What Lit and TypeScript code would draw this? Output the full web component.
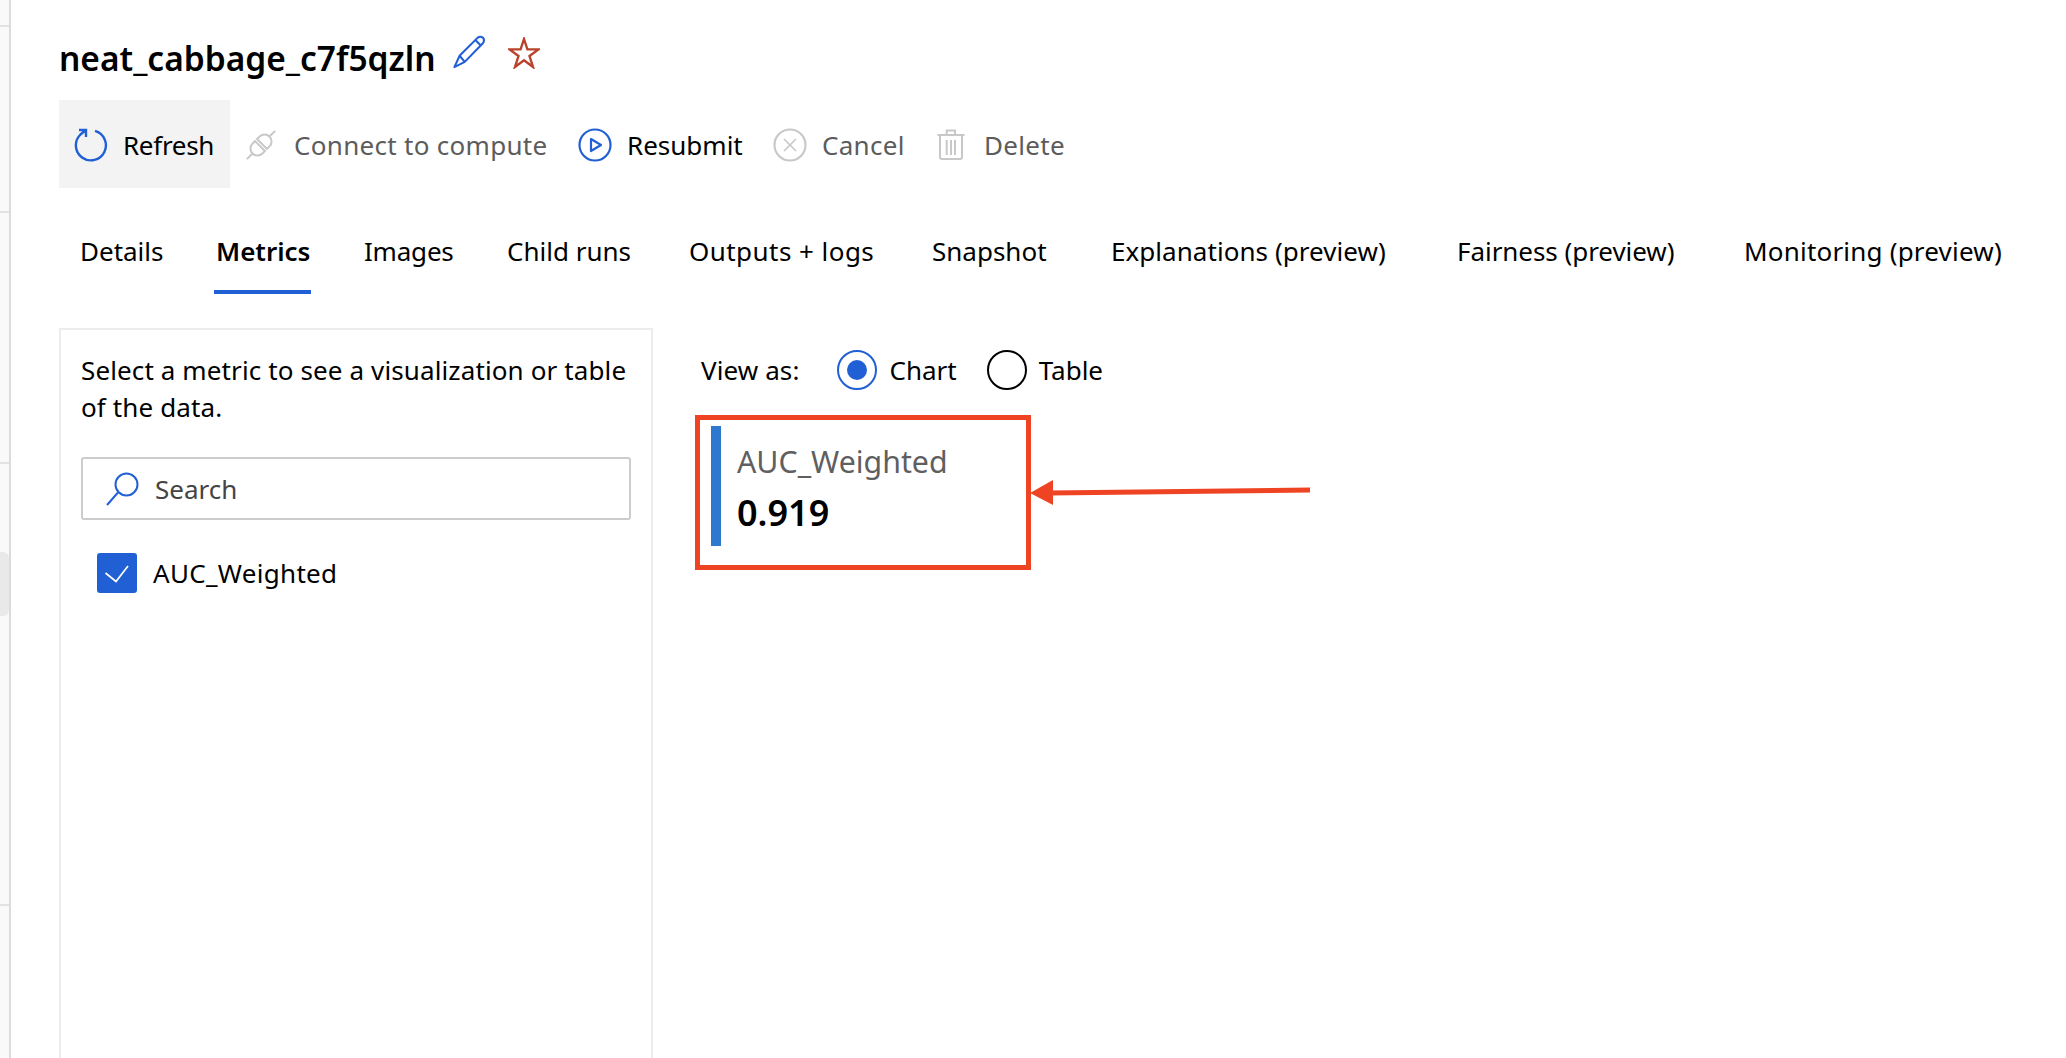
import { LitElement, html, css } from "lit";
import { customElement } from "lit/decorators.js";

const BLUE = "#2160d4";

@customElement("app-root")
export class AppRoot extends LitElement {
  static styles = css`
    :host { display: block; height: 1058px; overflow: hidden; background: #fff; color: #000;
      font-family: "Noto Sans", "Open Sans", sans-serif; font-size: 26px; }
    svg { display: block; flex: none; fill: none; }
    .page { display: flex; height: 1058px; }
    .rail { width: 9px; flex: none; background: #f9f9f9; border-right: 2px solid #dcdcdc; display: flex; flex-direction: column; }
    .seg { border-bottom: 2px solid #e2e2e2; box-sizing: border-box; }
    .s1 { height: 27px; } .s2 { height: 186px; } .s3 { height: 251px; } .s4 { height: 442px; padding-top: 88px; }
    .sel { height: 64px; background: #e9e9e9; border-radius: 0 6px 6px 0; }
    .main { flex: 1; padding-left: 48px; min-width: 0; position: relative; }
    .title { display: flex; align-items: center; height: 100px; box-sizing: border-box; padding-top: 15px; font-size: 33.5px; font-weight: 600; }
    .title .pencil { margin: -11px 0 0 17px; }
    .title .star { margin: -9px 0 0 23px; }
    .toolbar { display: grid; grid-template-columns: 187px 332px 195px 164px auto; height: 88px; align-items: center; white-space: nowrap; }
    .tool { display: flex; align-items: center; gap: 15px; padding-top: 1px; }
    .tool.on { background: #f3f3f3; width: 171px; height: 88px; box-sizing: border-box; padding-left: 15px; gap: 15px; letter-spacing: -0.3px; }
    .off { color: #5c5c5c; letter-spacing: 0.3px; }
    .tool.plug { gap: 18px; }
    .tool.del { gap: 19px; }
    .tabs { display: grid; height: 106px; margin-left: 21px;
      grid-template-columns: 135px 149px 143px 182px 243px 179px 346px 287px 300px; white-space: nowrap; }
    .tab { padding-top: 31px; line-height: 64px; justify-self: start; height: 106px; box-sizing: border-box; }
    .tab.active { font-weight: 600; padding: 31px 0 0 2px; width: 97px; margin-left: -2px; position: relative; left: 1px; border-bottom: 4px solid #2160d4; }
    .tab:nth-child(3) { letter-spacing: -0.2px; }
    .tab:nth-child(5) { letter-spacing: 0.45px; }
    .tab:nth-child(8) { letter-spacing: -0.05px; }
    .tab:nth-child(7) { letter-spacing: 0.05px; }
    .tab:nth-child(9) { letter-spacing: 0.2px; }
    .body { display: flex; margin-top: 34px; }
    .panel { width: 594px; height: 800px; box-sizing: border-box; border: 2px solid #ececec; border-bottom: 0; padding: 22px 20px 0; flex: none; }
    .help { line-height: 37px; margin: 0; letter-spacing: 0.12px; }
    .search { display: flex; align-items: center; height: 63px; box-sizing: border-box; border: 2px solid #ccc; border-radius: 3px; margin-top: 31px; padding-left: 23px; width: 550px; color: #444; }
    .search span { margin-left: 15px; }
    .check { display: flex; align-items: center; margin: 33px 0 0 16px; }
    .box { width: 40px; height: 40px; border-radius: 3px; background: #2160d4; }
    .check span { margin-left: 16px; letter-spacing: 0.3px; }
    .view { margin-left: 48px; }
    .viewrow { display: flex; align-items: center; height: 40px; margin-top: 22px; }
    .radio { width: 40px; height: 40px; border-radius: 50%; box-sizing: border-box; border: 2px solid #000; flex: none; display: flex; align-items: center; justify-content: center; }
    .radio.on { border-color: #2160d4; }
    .radio.on::after { content: ""; width: 20px; height: 20px; border-radius: 50%; background: #2160d4; }
    .lbl { margin-right: 38px; letter-spacing: 0.1px; }
    .rlabel { margin-left: 12px; margin-right: 30px; }
    .card { width: 336px; height: 155px; box-sizing: border-box; margin: 25px 0 0 -6px; border: 5px solid #ef4423; padding: 6px 11px; display: flex; }
    .bar { width: 10px; height: 120px; background: #2f78cf; flex: none; }
    .cardtext { margin-left: 16px; }
    .name { font-size: 30.3px; color: #5f5f5f; line-height: 40px; margin-top: 16px; }
    .value { font-size: 36px; font-weight: 600; line-height: 50px; margin-top: 6px; }
    .arrow { position: absolute; left: 1019px; top: 478px; }
  `;

  render() {
    const tabs = ["Details", "Metrics", "Images", "Child runs", "Outputs + logs", "Snapshot", "Explanations (preview)", "Fairness (preview)", "Monitoring (preview)"];
    return html`<div class="page">
      <div class="rail">
        <div class="seg s1"></div><div class="seg s2"></div>
        <div class="seg s3"></div><div class="seg s4"><div class="sel"></div></div>
      </div>
      <div class="main">
        <div class="title">
          <span>neat_cabbage_c7f5qzln</span>
          <svg class="pencil" width="32" height="34" viewBox="0 0 34 36" stroke="${BLUE}" stroke-width="2.2" stroke-linejoin="round">
            <path d="M1.5 34 L7 22 L26 3 Q29 0.5 32 3 Q34 6 31.5 9 L12.5 28.5 Z M7 22 L12.5 28.5 M24 5.5 L29.5 11"/>
          </svg>
          <svg class="star" width="32" height="32" viewBox="0 0 32 32" stroke="#b9442b" stroke-width="2.4">
            <path d="M16 2 L19.4 12.4 L30.5 12.4 L21.5 19 L25 30 L16 23.3 L7 30 L10.5 19 L1.5 12.4 L12.6 12.4 Z"/>
          </svg>
        </div>
        <div class="toolbar">
          <div class="tool on">
            <svg width="34" height="34" viewBox="0 0 34 34" stroke="${BLUE}" stroke-width="2.4">
              <path d="M21 2.9 A15 15 0 1 1 6.5 6.5 L12 2 M5 2 H12 V9"/>
            </svg>
            <span>Refresh</span>
          </div>
          <div class="tool plug">
            <svg width="30" height="30" viewBox="0 0 30 30" stroke="#c8c8c8" stroke-width="2">
              <g transform="rotate(-45 15 15)">
                <path d="M13.6 8 H10 a7 7 0 0 0 0 14 H13.6 Z M16.4 8 H20 a7 7 0 0 1 0 14 H16.4 Z M-5 15 H3 M27 15 H35"/>
              </g>
            </svg>
            <span class="off">Connect to compute</span>
          </div>
          <div class="tool">
            <svg width="34" height="34" viewBox="0 0 34 34" stroke="${BLUE}" stroke-width="2.2">
              <circle cx="17" cy="17" r="15.5"/><path d="M13 11 L23 17 L13 23 Z" stroke-linejoin="round"/>
            </svg>
            <span>Resubmit</span>
          </div>
          <div class="tool">
            <svg width="34" height="34" viewBox="0 0 34 34" stroke="#c8c8c8" stroke-width="2.2">
              <circle cx="17" cy="17" r="15.5"/><path d="M11 11 L23 23 M23 11 L11 23" stroke-width="1.6"/>
            </svg>
            <span class="off">Cancel</span>
          </div>
          <div class="tool del">
            <svg width="28" height="32" viewBox="0 0 28 32" stroke="#c8c8c8" stroke-width="2">
              <path d="M0.5 6 H27.5 M9.7 6 V1.5 H18 V6 M3 6 V28 Q3 30 5 30 H23 Q25 30 25 28 V6 M9.7 11 V26 M14 11 V26 M18 11 V26"/>
            </svg>
            <span class="off">Delete</span>
          </div>
        </div>
        <div class="tabs">
          ${tabs.map((t, i) => html`<div class="tab ${i === 1 ? "active" : ""}">${t}</div>`)}
        </div>
        <div class="body">
          <div class="panel">
            <p class="help">Select a metric to see a visualization or table of the data.</p>
            <div class="search">
              <svg width="34" height="34" viewBox="0 0 34 34" stroke="${BLUE}" stroke-width="2">
                <circle cx="20.5" cy="12.5" r="11"/><path d="M12 20.5 L1 33"/>
              </svg>
              <span>Search</span>
            </div>
            <div class="check">
              <svg class="box" viewBox="0 0 40 40" stroke="#fff" stroke-width="1.7"><path d="M8.5 20 L19 28.5 L31 13"/></svg>
              <span>AUC_Weighted</span>
            </div>
          </div>
          <div class="view">
            <div class="viewrow">
              <span class="lbl">View as:</span>
              <div class="radio on"></div><span class="rlabel">Chart</span>
              <div class="radio"></div><span class="rlabel">Table</span>
            </div>
            <div class="card">
              <div class="bar"></div>
              <div class="cardtext">
                <div class="name">AUC_Weighted</div>
                <div class="value">0.919</div>
              </div>
            </div>
          </div>
        </div>
        <svg class="arrow" width="285" height="30" viewBox="0 0 285 30">
          <path d="M0 15 L23 2 L23 27 Z" fill="#ef4423"/>
          <path d="M20 15 L280 12" stroke="#ef4423" stroke-width="5"/>
        </svg>
      </div>
    </div>`;
  }
}
